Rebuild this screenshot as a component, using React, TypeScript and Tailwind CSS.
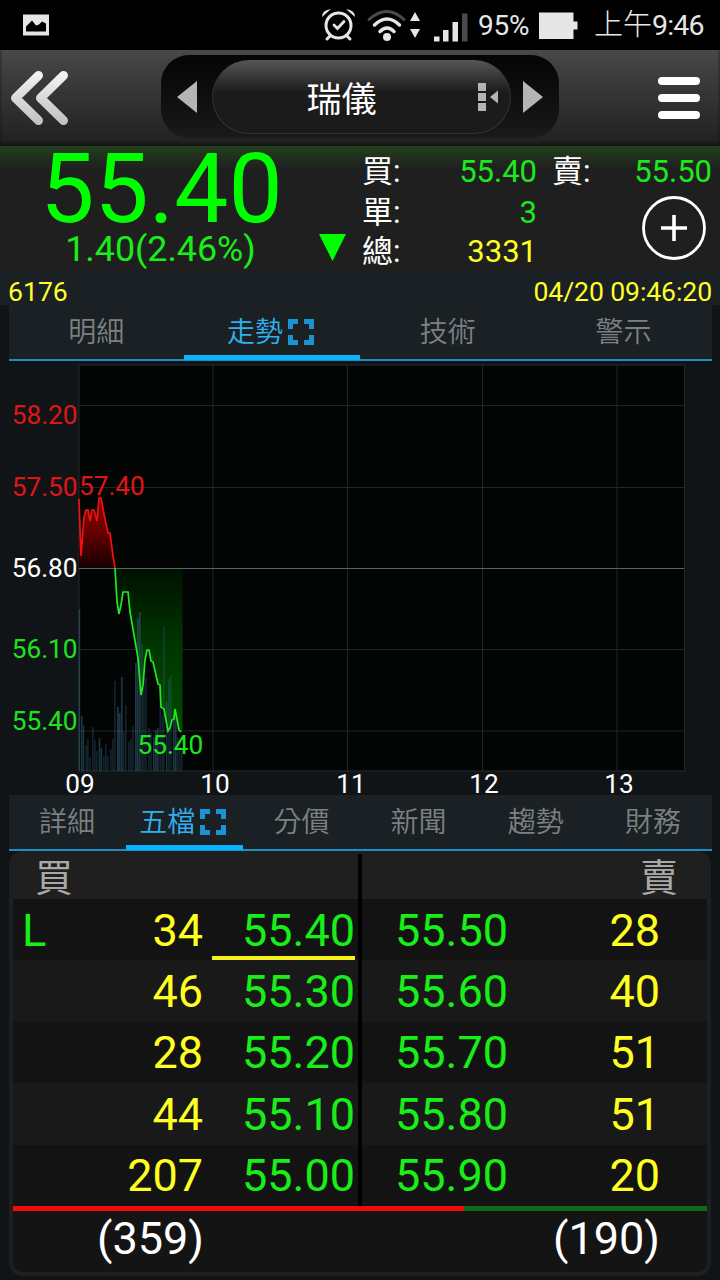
import React, { useState } from "react";

type TabItem = { label: string };

const mainTabs: TabItem[] = [{ label: '明細' }, { label: '走勢' }, { label: '技術' }, { label: '警示' }];
const subTabs: TabItem[] = [
    { label: '詳細' }, { label: '五檔' }, { label: '分價' },
    { label: '新聞' }, { label: '趨勢' }, { label: '財務' },
];

const orders = [
    { flag: 'L', bidQty: 34, bid: '55.40', ask: '55.50', askQty: 28 },
    { flag: '', bidQty: 46, bid: '55.30', ask: '55.60', askQty: 40 },
    { flag: '', bidQty: 28, bid: '55.20', ask: '55.70', askQty: 51 },
    { flag: '', bidQty: 44, bid: '55.10', ask: '55.80', askQty: 51 },
    { flag: '', bidQty: 207, bid: '55.00', ask: '55.90', askQty: 20 },
];

const priceLabels = [
    { y: 414.5, text: '58.20', color: '#e01515' },
    { y: 486, text: '57.50', color: '#e01515' },
    { y: 567.5, text: '56.80', color: '#ffffff' },
    { y: 648.5, text: '56.10', color: '#1ee41e' },
    { y: 720.5, text: '55.40', color: '#1ee41e' },
];

const hours = [
    { x: 80, text: '09' }, { x: 215, text: '10' }, { x: 351, text: '11' },
    { x: 484, text: '12' }, { x: 619, text: '13' },
];

// x, top, width
const volumes = [
    [78.7, 609, 1.5], [81, 716, 1.6], [83, 726, 1.2], [85.6, 745, 1], [87.4, 739, 1], [89.4, 757, 1],
    [92.4, 727, 1], [94.4, 740, 1], [96.4, 751, 1], [98.7, 738, 1.6], [100.7, 748, 1.4], [103.4, 756, 1],
    [105.4, 744, 1], [107.4, 756, 1], [110.4, 749, 1], [112.4, 739, 1], [114.4, 681, 1], [117, 707, 1.8],
    [119, 713, 1.6], [121, 677, 1.6], [123.4, 732, 1], [125.4, 705, 1], [128.4, 742, 1], [130.4, 739, 1],
    [132.4, 726, 1], [135, 663, 1.8], [137, 618, 1.6], [139, 612, 1.6], [141.5, 644, 1.2], [143.5, 673, 1],
    [145.5, 677, 1], [148.5, 728, 1], [150.5, 733, 1], [153, 737, 1.6], [155, 730, 1.6], [157, 728, 1.6],
    [159.6, 685, 1], [161.6, 715, 1], [163.4, 626, 1], [166, 702, 1.4], [168.4, 679, 1], [170.4, 675, 1],
    [173, 715, 1.6], [175, 717, 1.6], [177.4, 737, 1], [179.4, 740, 1], [181.4, 750, 1],
];

const redLine = '79,499 81,556 84,517 86,510 88,510 90,521 92,510 94,510 97,521 99,498 101,498 104,514 108,533 110,533 113,556 115,568';
const greenLine = '115,568 117,602 119,614 121,605 123,592 128,592 130,612 138,658 141,695 143,685 145,660 147,650 149,650 151,661 153,662 158,684 160,685 161,707 164,709 168,731 170,728 172,720 174,719 175,709 179,730 181,732';

function ExpandIcon() {
    return (
        <svg className="-mt-0.5 mr-[3px]" width="26" height="26" viewBox="0 0 26 26" fill="none" stroke="#1a92d4" strokeWidth="5">
            <path d="M2.500 10V2.500H10M16 2.500H23.500V10M23.500 16V23.500H16M10 23.500H2.500V16" />
        </svg>
    );
}

function Tabs({ items, initial }: { items: TabItem[], initial: number }) {
    const [active, setActive] = useState(initial);

    return (
        <div className="mx-[8.500px] flex h-14 border-b-2 border-[#1b8fc4] bg-[#1a2023]">
            {items.map((item, index) => (
                <button
                    key={item.label}
                    onClick={() => setActive(index)}
                    className={`-mb-px flex min-w-0 flex-1 items-center justify-center gap-[5px] border-b-5 pt-1.5 text-[28px] leading-none font-[350] ${
                        index === active ? 'border-[#08b4ff] text-[#2fb0ee]' : 'border-transparent text-[#7c8082]'
                    }`}
                >
                    <span>{item.label}</span>
                    {index === active && <ExpandIcon />}
                </button>
            ))}
        </div>
    );
}

function StatusBar() {
    return (
        <div className="flex h-[50px] items-center bg-black text-[#e6e6e6]">
            <svg width="720" height="50" viewBox="0 0 720 50" className="absolute" fill="#e6e6e6">
                <path fillRule="evenodd" d="M23 14.500h26v21H23zM26 31.500h20v-8l-4-2-3 3-3 1-4-5-6 6z" />
                <g fill="none" stroke="#e6e6e6" strokeLinecap="round">
                    <circle cx="338.500" cy="25.500" r="12.500" strokeWidth="3" />
                    <path d="M334 25l3.500 3.500 6.500-7" strokeWidth="2.800" />
                    <path d="M330 36l-3 3M347 36l3 3" strokeWidth="3" />
                    <path d="M369 19.500Q387 3.500 404 19.500" stroke="#4a4a4a" strokeWidth="3" />
                    <path d="M374.500 25Q387 13 399.500 25M380 31.500Q387 24.500 394 31.500" strokeWidth="3.500" />
                </g>
                <path d="M322 17q0-7 9-8zM355 17q0-7-9-8z" />
                <circle cx="387" cy="37" r="4" />
                <path d="M415 12l5 9h-10zM415 38l5-9h-10z" />
                <path d="M434 36.500h5.500v5H434zM443 30h5.500v11.500H443zM452.500 22h5.500v19.500h-5.500z" />
                <path d="M462 13.500h5.500v28H462z" fill="#4a4a4a" />
                <path d="M539 12.500h34.500v9h4v8h-4V39H539z" />
            </svg>
            <span className="ml-[478px] w-[54px] pt-0.5 text-[28px] leading-none whitespace-nowrap tracking-[-0.2px]">95%</span>
            <span className="ml-[62px] pt-0.5 text-[29px] leading-none font-light whitespace-nowrap">上午<span className="text-[28.500px] font-normal tracking-[-0.8px]">9:46</span></span>
        </div>
    );
}

function NavBar() {
    return (
        <div className="flex h-24 items-center justify-between bg-linear-to-b from-[#484848] to-[#202020] pr-5 pl-2.5 shadow-[inset_0_-3px_3px_#151515]">
            <svg width="60" height="56" viewBox="0 0 60 56" fill="none" strokeLinecap="round" strokeLinejoin="round">
                <defs>
                    <linearGradient id="chev" x1="0" y1="0" x2="0" y2="1">
                        <stop offset="0" stopColor="#f0f0f0" />
                        <stop offset="1" stopColor="#c4c4c4" />
                    </linearGradient>
                </defs>
                <path d="M28.500 5.500L5.500 28l23 22.500M53.500 5.500L30.500 28l23 22.500" stroke="url(#chev)" strokeWidth="9" />
            </svg>
            <div className="-mt-1 mr-px ml-[-7px] flex h-[83px] w-[398px] items-center justify-between rounded-[28px] bg-linear-to-b from-[#050505] to-[#1a1a1a] px-4">
                <svg className="mt-0.5" width="20" height="32" viewBox="0 0 20 32"><path d="M0 16L20 0v32z" fill="#b4b4b4" /></svg>
                <div className="mt-0.5 flex h-[74px] w-[299px] items-center rounded-[37px] border border-t-0 border-[#333] bg-linear-to-b from-[#575757] via-[#1b1b1b] via-45% to-[#1b1b1b] pr-[10px] pl-[94px]">
                    <span className="pt-[7px] text-[35px] leading-none text-white">瑞儀</span>
                    <svg className="ml-auto" width="22" height="30" viewBox="0 0 22 30" fill="#b4b4b4">
                        <path d="M0 1h8v8H0zM0 11h8v8H0zM0 21h8v8H0zM20 8.500v13l-8-6.500z" />
                    </svg>
                </div>
                <svg className="mt-0.5 -ml-0.5" width="20" height="32" viewBox="0 0 20 32"><path d="M20 16L0 0v32z" fill="#b4b4b4" /></svg>
            </div>
            <div className="flex w-[42px] flex-col gap-[9px]">
                <div className="h-2 rounded-full bg-white" />
                <div className="h-2 rounded-full bg-white" />
                <div className="h-2 rounded-full bg-white" />
            </div>
        </div>
    );
}

function Quote() {
    return (
        <div className="flex h-[126px] bg-[#201f20] bg-linear-to-b from-[#20401a] to-[#201f20] to-18%">
            <div className="flex w-[319px] flex-col items-center text-[#00ff00]">
                <div className="mt-[3px] ml-1 text-[96.500px] leading-[80px]">55.40</div>
                <div className="mt-0.5 ml-0.5 text-[35.800px] leading-[36px] text-[#18ee18]">1.40(2.46%)</div>
            </div>
            <div className="flex w-[43px] items-end pb-[11px]">
                <svg width="27" height="27" viewBox="0 0 27 27"><path d="M0 0h27L13.500 27z" fill="#00ff00" /></svg>
            </div>
            <div className="grid w-[175px] grid-cols-[40px_1fr] grid-rows-[40px_40px_40px] items-center pt-[5px] text-[31px] leading-none">
                <span className="text-white">買:</span>
                <span className="text-right text-[#1ee81e]">55.40</span>
                <span className="pt-0.5 text-white">單:</span>
                <span className="pt-0.5 text-right text-[#1ee81e]">3</span>
                <span className="text-white">總:</span>
                <span className="text-right text-[#ffff22]">3331</span>
            </div>
            <div className="flex flex-1 flex-col pt-[5px] pr-[8px] pl-[15px]">
                <div className="flex h-10 items-center justify-between text-[31px] leading-none">
                    <span className="text-white">賣:</span>
                    <span className="text-[#1ee81e]">55.50</span>
                </div>
                <svg className="mt-[5px] mr-[6px] self-end" width="64" height="64" viewBox="0 0 64 64" fill="none" stroke="#fff" strokeWidth="2.800">
                    <circle cx="32" cy="32" r="30.500" />
                    <path d="M19 32h26M32 19v26" strokeWidth="3.600" />
                </svg>
            </div>
        </div>
    );
}

function TrendChart() {
    return (
        <svg className="block overflow-visible" width="720" height="434" viewBox="0 361 720 434" fontSize="26.200">
            <defs>
                <linearGradient id="up" x1="0" y1="0" x2="0" y2="1">
                    <stop offset="0" stopColor="#8c0000" />
                    <stop offset="0.500" stopColor="#640000" />
                    <stop offset="1" stopColor="#150000" />
                </linearGradient>
                <linearGradient id="down" x1="0" y1="0" x2="0" y2="1">
                    <stop offset="0" stopColor="#001000" />
                    <stop offset="0.500" stopColor="#003800" />
                    <stop offset="1" stopColor="#004a00" />
                </linearGradient>
            </defs>
            <rect x="79" y="365" width="605.500" height="406" fill="#030504" stroke="#262a2a" />
            <path d="M213 365V771M347.500 365V771M482.500 365V771M617 365V771M79 405.500H684M79 487.500H684M79 649.500H684M79 731H684" stroke="#222525" fill="none" />
            <polygon points={`79,568 ${redLine}`} fill="url(#up)" />
            <polygon points={`${greenLine} 182.500,732 182.500,568`} fill="url(#down)" />
            {volumes.map(([x, top, w]) => (
                <rect key={x} x={x} y={top} width={w} height={771 - top} fill="#35607c" fillOpacity="0.550" />
            ))}
            <path d="M79 568.500H684" stroke="#4d6a74" />
            <polyline points={redLine} fill="none" stroke="#f01010" strokeWidth="1.700" />
            <polyline points={greenLine} fill="none" stroke="#22e822" strokeWidth="1.700" />
            {priceLabels.map((p) => (
                <text key={p.text} x="77.500" y={p.y + 9.500} textAnchor="end" fill={p.color}>{p.text}</text>
            ))}
            <text x="79" y="494.500" fill="#e01515">57.40</text>
            <text x="137.500" y="753.500" fill="#1ee41e">55.40</text>
            {hours.map((h) => (
                <text key={h.text} x={h.x} y="793" textAnchor="middle" fill="#fff">{h.text}</text>
            ))}
        </svg>
    );
}

function OrderBook() {
    return (
        <div className="relative mx-[9px] h-[425px] rounded-[14px] border-x-4 border-b-4 border-[#1f1f1f] bg-[#141414] text-[45px] leading-none">
            <div className="flex h-12 items-center justify-between rounded-t-[10px] bg-[#1f1f1f] px-[22px] pt-1.5 text-[38px] text-[#a8a8a8]">
                <span>買</span>
                <span className="mr-[7px]">賣</span>
            </div>
            {orders.map((o, index) => (
                <div
                    key={o.bid}
                    className={`grid h-[61.400px] grid-cols-[70px_120px_152px_38px_108px_1fr] items-center ${index % 2 ? 'bg-[#191919]' : 'bg-[#131313]'}`}
                >
                    <span className="pt-px pl-[9px] text-[#18ee18]">{o.flag}</span>
                    <span className="pt-px text-right text-[#ffff22]">{o.bidQty}</span>
                    <span className={`ml-[9px] flex h-full items-center justify-end border-y-4 border-t-transparent pt-px ${index === 0 ? 'border-b-[#f5f020]' : 'border-b-transparent'} text-[#18ee18]`}>{o.bid}</span>
                    <span />
                    <span className="pt-px pl-[2px] text-[#18ee18]">{o.ask}</span>
                    <span className="pt-px pr-[47px] text-right text-[#ffff22]">{o.askQty}</span>
                </div>
            ))}
            <div className="flex h-[5px]">
                <div className="w-[451px] bg-[#f00c0c]" />
                <div className="flex-1 bg-[#0c6b1c]" />
            </div>
            <div className="flex h-[56px] items-center justify-between pr-[47px] pl-[84px] text-white">
                <span>(359)</span>
                <span>(190)</span>
            </div>
            <div className="absolute top-[3px] left-[345px] h-[352px] w-1 bg-black" />
        </div>
    );
}

export default function App() {
    return (
        <div className="h-[1280px] w-[720px] overflow-hidden bg-[#101416] font-['Roboto','Noto_Sans_CJK_TC',sans-serif]">
            <StatusBar />
            <NavBar />
            <Quote />
            <div className="flex h-[33px] items-center justify-between bg-[#1a2023] px-2 pt-[7px] text-[26.600px] leading-none text-[#ffff2a]">
                <span>6176</span>
                <span className="tracking-[-0.1px]">04/20 09:46:20</span>
            </div>
            <Tabs items={mainTabs} initial={1} />
            <TrendChart />
            <Tabs items={subTabs} initial={1} />
            <OrderBook />
        </div>
    );
}
